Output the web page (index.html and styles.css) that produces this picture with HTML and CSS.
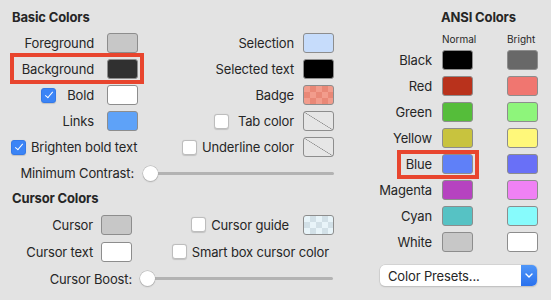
FILE: index.html
```html
<!DOCTYPE html>
<html lang="en">
<head>
    <meta charset="UTF-8">
    <title>Colors</title>
    <link rel="stylesheet" href="styles.css">
</head>
<body>
    <div class="window">
        <div class="left">
            <h3 class="title">Basic Colors</h3>
            <div class="basic-grid">
                <div class="lbl">Foreground</div>
                <div class="well" style="background:#c7c7c7"></div>
                <div class="lbl mid">Selection</div>
                <div class="well" style="background:#c6dcfb"></div>

                <div class="lbl">Background</div>
                <div class="well" style="background:#303030"></div>
                <div class="lbl mid">Selected text</div>
                <div class="well" style="background:#000"></div>

                <div class="lbl"><span class="check on"></span>Bold</div>
                <div class="well" style="background:#fff"></div>
                <div class="lbl mid">Badge</div>
                <div class="well badge"></div>

                <div class="lbl">Links</div>
                <div class="well" style="background:#5ea2f8"></div>
                <div class="lbl mid"><span class="check"></span>Tab color</div>
                <div class="well none"></div>

                <div class="lbl wide left-al"><span class="check on"></span>Brighten bold text</div>
                <div class="lbl mid underline"><span class="check"></span>Underline color</div>
                <div class="well none"></div>

                <div class="lbl wide slider-lbl">Minimum Contrast:</div>
                <div class="slider wide2"><span class="knob"></span></div>
            </div>

            <h3 class="title second">Cursor Colors</h3>
            <div class="cursor-grid">
                <div class="lbl">Cursor</div>
                <div class="well" style="background:#c7c7c7"></div>
                <div class="lbl mid guide"><span class="check"></span>Cursor guide</div>
                <div class="well guide-well"></div>

                <div class="lbl">Cursor text</div>
                <div class="well" style="background:#fff"></div>
                <div class="lbl wide2 smart"><span class="check"></span>Smart box cursor color</div>

                <div class="lbl wide slider-lbl">Cursor Boost:</div>
                <div class="slider wide2 boost"><span class="knob"></span></div>
            </div>
        </div>

        <div class="right">
            <h3 class="title ansi-title">ANSI Colors</h3>
            <div class="ansi-grid">
                <div></div>
                <div class="small">Normal</div>
                <div></div>
                <div class="small">Bright</div>

                <div class="lbl">Black</div>
                <div class="well" style="background:#000"></div><div></div>
                <div class="well" style="background:#686868"></div>

                <div class="lbl">Red</div>
                <div class="well" style="background:#b9321c"></div><div></div>
                <div class="well" style="background:#f07670"></div>

                <div class="lbl">Green</div>
                <div class="well" style="background:#55bd3a"></div><div></div>
                <div class="well" style="background:#8ef57b"></div>

                <div class="lbl">Yellow</div>
                <div class="well" style="background:#c8c33e"></div><div></div>
                <div class="well" style="background:#fff87a"></div>

                <div class="lbl">Blue</div>
                <div class="well" style="background:#5f80f8"></div><div></div>
                <div class="well" style="background:#6970f7"></div>

                <div class="lbl">Magenta</div>
                <div class="well" style="background:#b643c0"></div><div></div>
                <div class="well" style="background:#f081f4"></div>

                <div class="lbl">Cyan</div>
                <div class="well" style="background:#56c2c4"></div><div></div>
                <div class="well" style="background:#87fbfc"></div>

                <div class="lbl">White</div>
                <div class="well" style="background:#c7c7c7"></div><div></div>
                <div class="well" style="background:#fff"></div>
            </div>
            <div class="popup">
                <span>Color Presets...</span>
                <span class="popup-arrow">
                    <svg width="8" height="5" viewBox="0 0 8 5"><path d="M1 1 L4 4 L7 1" fill="none" stroke="#fff" stroke-width="1.4" stroke-linecap="round" stroke-linejoin="round"/></svg>
                </span>
            </div>
        </div>

        <div class="highlight hl-bg"></div>
        <div class="highlight hl-blue"></div>
    </div>
</body>
</html>
```

FILE: styles.css
```css
body {
    margin: 0;
    background-color: #e3e3e3;
    font-family: Inter, "Noto Sans", sans-serif;
    font-size: 13px;
    letter-spacing: -0.15px;
    color: #262626;
}
.window {
    position: relative;
    display: flex;
    width: 551px;
    height: 300px;
    overflow: hidden;
}
.left {
    box-sizing: border-box;
    width: 346px;
    flex-shrink: 0;
    padding-left: 12px;
}
.title {
    margin: 0;
    padding-top: 9px;
    height: 16px;
    line-height: 16px;
    font-size: 13px;
    font-weight: 700;
}
.title.second {
    padding-top: 4px;
}
.basic-grid {
    margin-top: 5px;
    display: grid;
    grid-template-columns: 95px 31px 165px 31px;
    grid-auto-rows: 26px;
    align-items: center;
}
.cursor-grid {
    margin-top: 5px;
    display: grid;
    grid-template-columns: 89px 31px 171px 31px;
    grid-auto-rows: 27px;
    align-items: center;
}
.lbl {
    display: flex;
    align-items: center;
    justify-content: flex-end;
    padding-right: 13px;
    white-space: nowrap;
}
.lbl.mid {
    padding-right: 9px;
}
.cursor-grid .lbl {
    padding-right: 8px;
}
.cursor-grid .lbl.guide {
    padding-right: 14px;
}
.wide {
    grid-column: span 2;
}
.wide2 {
    grid-column: span 2;
}
.left-al {
    justify-content: flex-start;
    margin-left: -1px;
}
.lbl.slider-lbl {
    padding-right: 4px;
}
.cursor-grid .lbl.slider-lbl {
    padding-right: 0;
}
.cursor-grid .lbl.smart {
    padding-right: 5px;
}
.well {
    width: 29px;
    height: 18px;
    border: 1px solid #8d8d8d;
    border-radius: 3px;
}
.badge {
    background-color: #f29c8c;
    background-image:
        linear-gradient(45deg, #e98877 25%, transparent 25%, transparent 75%, #e98877 75%),
        linear-gradient(45deg, #e98877 25%, transparent 25%, transparent 75%, #e98877 75%);
    background-size: 12px 12px;
    background-position: 0 0, 6px 6px;
}
.guide-well {
    background-color: #e8f4f9;
    background-image:
        linear-gradient(45deg, #d2e0e7 25%, transparent 25%, transparent 75%, #d2e0e7 75%),
        linear-gradient(45deg, #d2e0e7 25%, transparent 25%, transparent 75%, #d2e0e7 75%);
    background-size: 12px 12px;
    background-position: 0 0, 6px 6px;
}
.none {
    background: linear-gradient(to top right, transparent calc(50% - 0.6px), #8a8a8a 50%, transparent calc(50% + 0.6px)) #e6e6e6;
}
.check {
    display: inline-block;
    flex-shrink: 0;
    position: relative;
    width: 13px;
    height: 13px;
    margin-right: 5px;
    background: #fff;
    border: 0.5px solid #bdbdbd;
    border-radius: 3px;
    box-shadow: 0 0.5px 1px rgba(0,0,0,0.15);
}
.check.on {
    background: #3b84f6;
    border-color: #3479e8;
}
.check.on::after {
    content: "";
    position: absolute;
    left: 4.5px;
    top: 1.5px;
    width: 3px;
    height: 7px;
    border: solid #fff;
    border-width: 0 1.6px 1.6px 0;
    transform: rotate(40deg);
}
.basic-grid .lbl .check.on {
    margin-right: 11px;
}
.basic-grid .left-al .check.on {
    margin-right: 5px;
}
.basic-grid .mid .check {
    margin-right: 9px;
}
.basic-grid .underline .check {
    margin-right: 5px;
}
.cursor-grid .check {
    margin-right: 5px;
}
.slider {
    position: relative;
    height: 16px;
    display: flex;
    align-items: center;
    margin-left: 5px;
}
.slider::before {
    content: "";
    position: absolute;
    left: 10px;
    right: 0;
    height: 3px;
    border-radius: 2px;
    background: #b3b3b3;
}
.slider.boost {
    margin-left: 8px;
    margin-right: 1px;
}
.knob {
    position: relative;
    width: 15px;
    height: 15px;
    border-radius: 50%;
    background: #fff;
    box-shadow: 0 0 0 0.5px #b0b0b0, 0 1px 1.5px rgba(0,0,0,0.2);
}
.right {
    margin-left: 34px;
    width: 160px;
}
.ansi-title {
    padding-left: 61px;
}
.ansi-grid {
    margin-top: 6px;
    display: grid;
    grid-template-columns: 62px 31px 34px 31px;
    grid-template-rows: 16px;
    grid-auto-rows: 26px;
    align-items: center;
}
.ansi-grid .lbl {
    padding-right: 10px;
}
.small {
    font-size: 10px;
    letter-spacing: 0;
    white-space: nowrap;
}
.popup {
    margin-top: 10px;
    width: 157px;
    height: 21px;
    display: flex;
    align-items: center;
    justify-content: space-between;
    background: #fff;
    border-radius: 5px;
    box-shadow: 0 0 0 0.5px #c3c3c3, 0 1px 1.5px rgba(0,0,0,0.18);
    overflow: hidden;
}
.popup span:first-child {
    padding-left: 8px;
}
.popup-arrow {
    width: 16px;
    height: 21px;
    display: flex;
    align-items: center;
    justify-content: center;
    background: linear-gradient(#4f96f8, #2a71ee);
}
.highlight {
    position: absolute;
    border: 4px solid #e8452e;
}
.hl-bg {
    left: 10px;
    top: 53px;
    width: 126px;
    height: 23px;
}
.hl-blue {
    left: 397px;
    top: 150px;
    width: 74px;
    height: 21px;
}
```
